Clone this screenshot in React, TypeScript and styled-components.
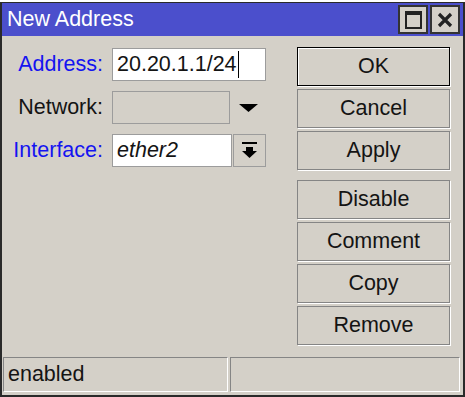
import React from 'react';
import styled, { createGlobalStyle } from 'styled-components';

const GlobalStyle = createGlobalStyle`
  html, body {
    margin: 0;
    padding: 0;
    background: #ffffff;
  }
  body {
    font-family: 'Liberation Sans', Arial, sans-serif;
  }
`;

const Window = styled.div`
  box-sizing: border-box;
  margin-top: 2px;
  width: 465px;
  height: 395px;
  border: 2px solid #2a2a2a;
  border-top-width: 1px;
  background: #d4d0c8;
  display: flex;
  flex-direction: column;
  font-size: 21.5px;
  color: #141414;
`;

const TitleBar = styled.div`
  height: 33px;
  box-sizing: border-box;
  padding: 2px 3px 2px 5px;
  background: #4b4fcc;
  display: flex;
  align-items: center;
  gap: 2px;
`;

const Title = styled.div`
  flex: 1;
  color: #ffffff;
  line-height: 29px;
`;

const TitleButton = styled.div`
  box-sizing: border-box;
  width: 30px;
  height: 29px;
  border: 2px solid #333333;
  background: #d4d0c8;
  display: flex;
  align-items: center;
  justify-content: center;
`;

const MaxBox = styled.div`
  box-sizing: border-box;
  width: 17px;
  height: 18px;
  border: 2px solid #222222;
  border-top-width: 4px;
`;

const Main = styled.div`
  flex: 1;
  display: flex;
`;

const Form = styled.div`
  display: grid;
  grid-template-columns: 101px 154px;
  grid-auto-rows: 33px;
  column-gap: 9px;
  row-gap: 10px;
  padding-top: 12px;
  align-content: start;
`;

const Label = styled.div<{ $link?: boolean }>`
  text-align: right;
  line-height: 33px;
  color: ${(p) => (p.$link ? '#1414f0' : '#141414')};
`;

const FieldRow = styled.div`
  display: flex;
  align-items: stretch;
  gap: 1px;
`;

const Field = styled.div<{ $disabled?: boolean; $italic?: boolean }>`
  box-sizing: border-box;
  flex: 1;
  border: 1px solid #9c9c9c;
  background: ${(p) => (p.$disabled ? '#d4d0c8' : '#ffffff')};
  padding-left: 4px;
  line-height: 31px;
  font-style: ${(p) => (p.$italic ? 'italic' : 'normal')};
  display: flex;
  align-items: center;
`;

const Caret = styled.span`
  display: inline-block;
  width: 1px;
  height: 27px;
  background: #000000;
  margin-left: 1px;
`;

const ArrowSlot = styled.div`
  width: 35px;
  display: flex;
  align-items: center;
  justify-content: center;
`;

const DropButton = styled.div`
  box-sizing: border-box;
  width: 33px;
  border: 1px solid #9c9c9c;
  background: #d4d0c8;
  display: flex;
  align-items: center;
  justify-content: center;
`;

const Buttons = styled.div`
  margin-left: 31px;
  width: 153px;
  padding-top: 11px;
  display: flex;
  flex-direction: column;
  gap: 3px;
`;

const Spacer = styled.div`
  height: 4px;
`;

const Button = styled.div<{ $default?: boolean }>`
  box-sizing: border-box;
  height: 39px;
  border: 1px solid ${(p) => (p.$default ? '#000000' : '#858585')};
  box-shadow: ${(p) =>
    p.$default
      ? 'inset 1px 1px 0 #ffffff, 1px 1px 0 #ffffff'
      : '1px 1px 0 #ffffff'};
  display: flex;
  align-items: center;
  justify-content: center;
  line-height: 1;
`;

const StatusBar = styled.div`
  display: flex;
  gap: 2px;
  padding: 0 3px 3px 1px;
`;

const StatusPanel = styled.div<{ $w: number }>`
  box-sizing: border-box;
  width: ${(p) => p.$w}px;
  height: 35px;
  border: 1px solid #ffffff;
  border-top-color: #858585;
  border-left-color: #858585;
  padding-left: 4px;
  line-height: 33px;
`;

export default function App() {
  return (
    <>
      <GlobalStyle />
      <Window>
        <TitleBar>
          <Title>New Address</Title>
          <TitleButton>
            <MaxBox />
          </TitleButton>
          <TitleButton>
            <svg width="16" height="16" viewBox="0 0 16 16">
              <path d="M2 2 L14 14 M14 2 L2 14" stroke="#222" strokeWidth="3.2" />
            </svg>
          </TitleButton>
        </TitleBar>
        <Main>
          <Form>
            <Label $link>Address:</Label>
            <FieldRow>
              <Field>
                20.20.1.1/24
                <Caret />
              </Field>
            </FieldRow>
            <Label>Network:</Label>
            <FieldRow>
              <Field $disabled />
              <ArrowSlot>
                <svg width="19" height="8" viewBox="0 0 19 8">
                  <polygon points="0,0 19,0 9.5,8" fill="#000" />
                </svg>
              </ArrowSlot>
            </FieldRow>
            <Label $link>Interface:</Label>
            <FieldRow>
              <Field $italic>ether2</Field>
              <DropButton>
                <svg width="15" height="17" viewBox="0 0 15 17">
                  <rect x="0" y="0" width="15" height="2" fill="#000" />
                  <rect x="4" y="5" width="7" height="4" fill="#000" />
                  <polygon points="0,9 15,9 7.5,16" fill="#000" />
                </svg>
              </DropButton>
            </FieldRow>
          </Form>
          <Buttons>
            <Button $default>OK</Button>
            <Button>Cancel</Button>
            <Button>Apply</Button>
            <Spacer />
            <Button>Disable</Button>
            <Button>Comment</Button>
            <Button>Copy</Button>
            <Button>Remove</Button>
          </Buttons>
        </Main>
        <StatusBar>
          <StatusPanel $w={225}>enabled</StatusPanel>
          <StatusPanel $w={230} />
        </StatusBar>
      </Window>
    </>
  );
}
